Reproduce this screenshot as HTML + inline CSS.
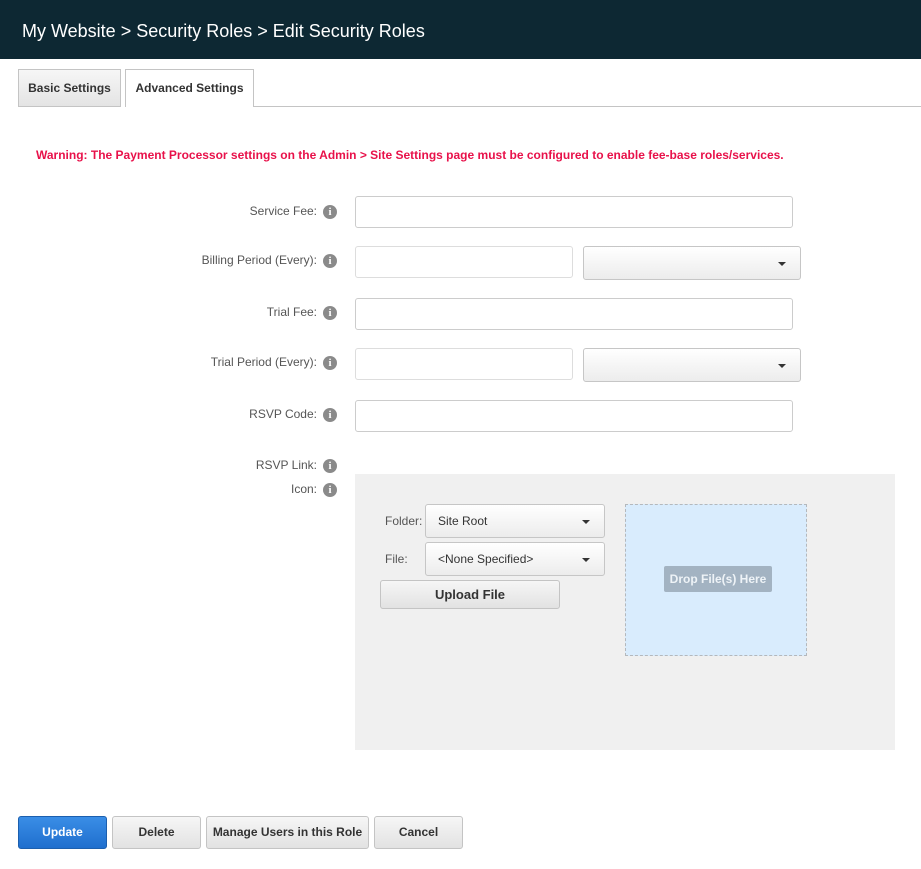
<!DOCTYPE html>
<html><head><style>
*{box-sizing:border-box}
body{margin:0;width:921px;height:869px;background:#fff;font-family:"Liberation Sans",Arial,sans-serif;position:relative;overflow:hidden}
.a{position:absolute}
.hdr{left:0;top:0;width:921px;height:59px;background:#0d2833;color:#fff;font-size:18px;padding:21px 0 0 22px}
.tab{height:38px;font-size:12px;font-weight:bold;color:#333;text-align:center;line-height:37px;border:1px solid #c4c4c4;border-bottom:none}
.lbl{font-size:12px;color:#555;text-align:right;width:300px;left:17px}
.ic{width:14px;height:14px;border-radius:50%;background:#8a8a8a;color:#fff;font-size:11px;font-weight:bold;text-align:center;line-height:14px;font-family:"Liberation Serif",serif}
.in{border:1px solid #ccc;border-radius:3px;background:#fff}
.sel{border:1px solid #c6c6c6;border-radius:3px;background:linear-gradient(#fff,#ececec);font-size:12px;color:#333;padding-left:12px}
.sel:after{content:"";position:absolute;right:14px;top:50%;margin-top:-1px;border-left:4px solid transparent;border-right:4px solid transparent;border-top:4px solid #333}
.btn{height:33px;border:1px solid #c4c4c4;border-radius:3px;background:linear-gradient(#f6f6f6,#e2e2e2);font-size:12px;font-weight:bold;color:#333;text-align:center;line-height:31px}
</style></head><body>
<div class="a hdr">My Website &gt; Security Roles &gt; Edit Security Roles</div>
<div class="a" style="left:253px;top:106px;width:668px;height:1px;background:#c4c4c4"></div>
<div class="a tab" style="left:18px;top:69px;width:103px;background:linear-gradient(#f6f6f6,#e4e4e4);border-bottom:1px solid #c4c4c4">Basic Settings</div>
<div class="a tab" style="left:125px;top:69px;width:129px;background:#fff">Advanced Settings</div>
<div class="a" style="left:36px;top:148px;font-size:12px;font-weight:bold;color:#e8114a">Warning: The Payment Processor settings on the Admin &gt; Site Settings page must be configured to enable fee-base roles/services.</div>

<div class="a lbl" style="top:204px">Service Fee:</div><div class="a ic" style="left:323px;top:205px">i</div>
<div class="a in" style="left:355px;top:196px;width:438px;height:32px"></div>
<div class="a lbl" style="top:253px">Billing Period (Every):</div><div class="a ic" style="left:323px;top:254px">i</div>
<div class="a in" style="left:355px;top:246px;width:218px;height:32px;border-color:#ddd"></div>
<div class="a sel" style="left:583px;top:246px;width:218px;height:34px"></div>
<div class="a lbl" style="top:305px">Trial Fee:</div><div class="a ic" style="left:323px;top:306px">i</div>
<div class="a in" style="left:355px;top:298px;width:438px;height:32px"></div>
<div class="a lbl" style="top:355px">Trial Period (Every):</div><div class="a ic" style="left:323px;top:356px">i</div>
<div class="a in" style="left:355px;top:348px;width:218px;height:32px;border-color:#ddd"></div>
<div class="a sel" style="left:583px;top:348px;width:218px;height:34px"></div>
<div class="a lbl" style="top:407px">RSVP Code:</div><div class="a ic" style="left:323px;top:408px">i</div>
<div class="a in" style="left:355px;top:400px;width:438px;height:32px"></div>
<div class="a lbl" style="top:458px">RSVP Link:</div><div class="a ic" style="left:323px;top:459px">i</div>
<div class="a lbl" style="top:482px">Icon:</div><div class="a ic" style="left:323px;top:483px">i</div>

<div class="a" style="left:355px;top:474px;width:540px;height:276px;background:#f0f0f0"></div>
<div class="a" style="left:385px;top:514px;font-size:12px;color:#555">Folder:</div>
<div class="a sel" style="left:425px;top:504px;width:180px;height:34px;line-height:32px">Site Root</div>
<div class="a" style="left:385px;top:552px;font-size:12px;color:#555">File:</div>
<div class="a sel" style="left:425px;top:542px;width:180px;height:34px;line-height:32px">&lt;None Specified&gt;</div>
<div class="a btn" style="left:380px;top:580px;width:180px;height:29px;line-height:27px;font-size:13px">Upload File</div>
<div class="a" style="left:625px;top:504px;width:182px;height:152px;background:#d9ecfd;border:1px dashed #b4b8bc"></div>
<div class="a" style="left:664px;top:566px;width:108px;height:26px;background:#a3b3c2;border-radius:2px;color:#eef3f7;font-size:12px;font-weight:bold;text-align:center;line-height:26px">Drop File(s) Here</div>

<div class="a btn" style="left:18px;top:816px;width:89px;background:linear-gradient(#3a8ee6,#1f6fce);border-color:#1c5fae;color:#fff">Update</div>
<div class="a btn" style="left:112px;top:816px;width:89px">Delete</div>
<div class="a btn" style="left:206px;top:816px;width:163px">Manage Users in this Role</div>
<div class="a btn" style="left:374px;top:816px;width:89px">Cancel</div>
</body></html>
